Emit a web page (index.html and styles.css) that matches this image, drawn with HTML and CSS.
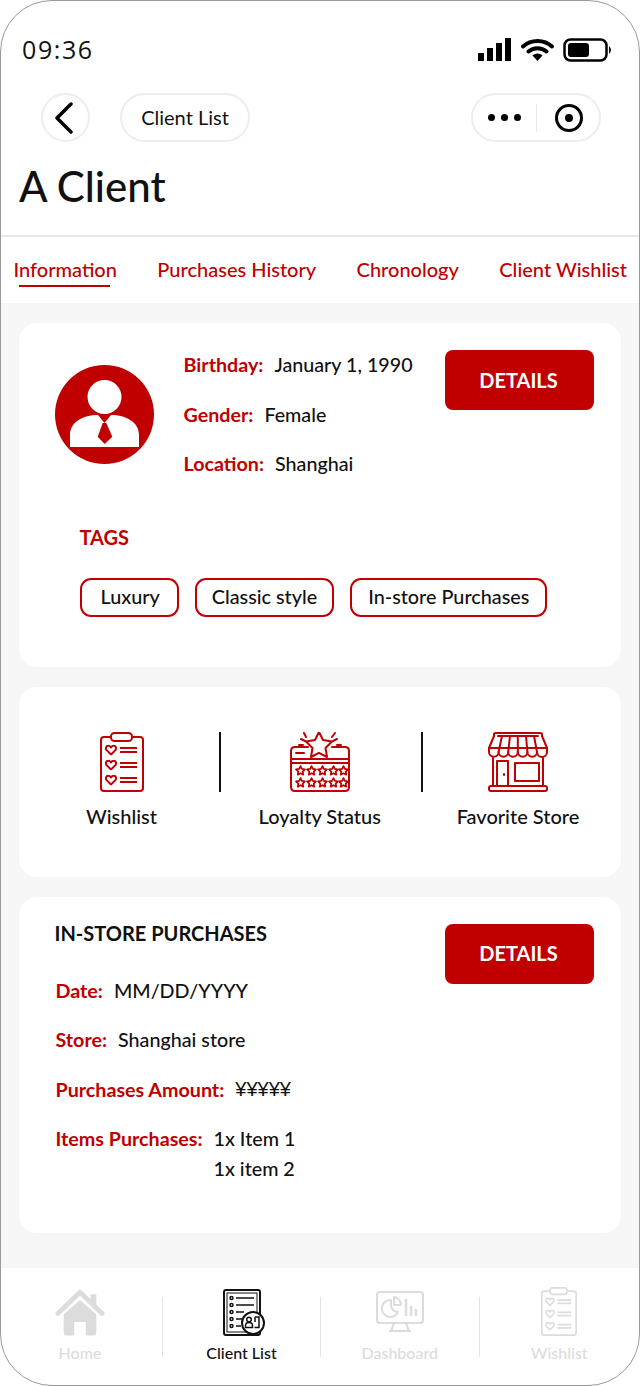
FILE: index.html
```html
<!DOCTYPE html>
<html lang="en">
<head>
    <meta charset="UTF-8">
    <meta name="viewport" content="width=device-width, initial-scale=1.0">
    <title>A Client</title>
    <link rel="stylesheet" href="styles.css">
</head>
<body>
    <svg class="defs" width="0" height="0">
        <symbol id="heart" viewBox="0 0 12 11">
            <path d="M6 10 1.600 5.600C.2 4 1 1.200 3.200 1.200 4.500 1.200 5.400 2 6 3 6.600 2 7.500 1.200 8.800 1.200 11 1.200 11.800 4 10.400 5.600Z" fill="none" stroke="currentColor" stroke-width="2" stroke-linejoin="round"/>
        </symbol>
        <symbol id="clipboard" viewBox="0 0 44 60">
            <g fill="none" stroke="currentColor" stroke-width="2" stroke-linejoin="round">
                <path d="M11 5H4Q1 5 1 8V56Q1 59 4 59H40Q43 59 43 56V8Q43 5 40 5H32"/>
                <rect x="11" y="1" width="21" height="8" rx="3.500"/>
                <path d="M20 16H37M20 20H37M20 31H37M20 35H37M20 46H37M20 50H37"/>
            </g>
            <use href="#heart" x="5" y="12.500" width="12" height="11"/>
            <use href="#heart" x="5" y="27.500" width="12" height="11"/>
            <use href="#heart" x="5" y="42.500" width="12" height="11"/>
        </symbol>
        <symbol id="ministar" viewBox="0 0 10 10">
            <path d="M5 1 6.200 3.600 9 4 7 6 7.500 8.800 5 7.500 2.500 8.800 3 6 1 4 3.800 3.600Z" fill="none" stroke="currentColor" stroke-width="1.600" stroke-linejoin="round"/>
        </symbol>
    </svg>

    <div class="phone">
        <header class="top">
            <div class="status">
                <span class="clock">09:36</span>
                <div class="status-icons">
                    <svg width="34" height="24" viewBox="0 0 34 24"><path d="M0 15h6v8H0zM9 10h6v13H9zM18 5h6v18h-6zM27 0h6v23h-6z" fill="#000"/></svg>
                    <svg width="33" height="24" viewBox="0 0 33 24"><path d="M2 8.500C10 1 23 1 31 8.500M7.500 13.500C12.500 9 20.500 9 25.500 13.500" fill="none" stroke="#000" stroke-width="4" stroke-linecap="round"/><path d="M11.500 17.500Q16.500 13.500 21.500 17.500L16.500 23Z" fill="#000"/></svg>
                    <svg width="50" height="24" viewBox="0 0 50 24"><rect x="1.500" y="1.500" width="42" height="21" rx="6" fill="none" stroke="#000" stroke-width="2.500"/><rect x="5" y="5" width="21" height="14" rx="3" fill="#000"/><path d="M46 8q4 4 0 8z" fill="#000"/></svg>
                </div>
            </div>
            <div class="nav">
                <div class="back">
                    <svg width="20" height="32" viewBox="0 0 20 32"><path d="M17 2 3 16l14 14" fill="none" stroke="#000" stroke-width="3.500" stroke-linecap="round" stroke-linejoin="round"/></svg>
                </div>
                <div class="pill">Client List</div>
                <div class="capsule">
                    <div class="dots"><i></i><i></i><i></i></div>
                    <div class="capsule-line"></div>
                    <svg width="28" height="28" viewBox="0 0 28 28"><circle cx="14" cy="14" r="12.500" fill="none" stroke="#000" stroke-width="3"/><circle cx="14" cy="14" r="4" fill="#000"/></svg>
                </div>
            </div>
            <h1>A Client</h1>
        </header>

        <nav class="tabs">
            <a class="tab active">Information</a>
            <a class="tab">Purchases History</a>
            <a class="tab">Chronology</a>
            <a class="tab">Client Wishlist</a>
        </nav>

        <main class="content">
            <section class="card profile">
                <div class="profile-top">
                    <svg class="avatar" width="99" height="99" viewBox="0 0 99 99">
                        <circle cx="49.500" cy="49.500" r="49.500" fill="#c00000"/>
                        <circle cx="49.500" cy="32" r="17" fill="#fff"/>
                        <path d="M15 82V70C15 57 28 50 43 50L49.500 58 56 50C71 50 84 57 84 70V82Z" fill="#fff"/>
                        <path d="M47.700 58H51.300L57.300 71.700 49.700 79 42.700 71.700Z" fill="#c00000"/>
                    </svg>
                    <div class="info">
                        <div class="row"><b>Birthday:</b><span>January 1, 1990</span></div>
                        <div class="row"><b>Gender:</b><span>Female</span></div>
                        <div class="row"><b>Location:</b><span>Shanghai</span></div>
                    </div>
                    <button class="details profile-btn">DETAILS</button>
                </div>
                <h3 class="tags-title">TAGS</h3>
                <div class="tags">
                    <span class="tag tag-luxury">Luxury</span>
                    <span class="tag tag-classic">Classic style</span>
                    <span class="tag">In-store Purchases</span>
                </div>
            </section>

            <section class="card shortcuts">
                <div class="shortcut">
                    <svg class="red" width="44" height="60"><use href="#clipboard"/></svg>
                    <span>Wishlist</span>
                </div>
                <div class="vline"></div>
                <div class="shortcut shortcut-mid">
                    <svg class="red" width="60" height="60" viewBox="0 0 60 60">
                        <g fill="none" stroke="currentColor" stroke-width="2" stroke-linejoin="round" stroke-linecap="round">
                            <path d="M18 15H5Q1 15 1 19V55Q1 59 5 59H55Q59 59 59 55V19Q59 15 55 15H42"/>
                            <path d="M1 27H59M1 31H59M6 21H14"/>
                            <path d="M29 0 33 8 42 9.500 35.500 16 37 25 29 20.800 21 25 22.500 16 16 9.500 25 8Z" fill="#fff"/>
                            <path d="M11 7 15 9M14 1 16 5M47 7 43 9M45 1 42 5M9 13H13M51 13H47"/>
                        </g>
                        <use href="#ministar" x="5" y="33" width="11" height="11"/><use href="#ministar" x="16" y="33" width="11" height="11"/><use href="#ministar" x="27" y="33" width="11" height="11"/><use href="#ministar" x="38" y="33" width="11" height="11"/><use href="#ministar" x="48" y="33" width="11" height="11"/>
                        <use href="#ministar" x="5" y="45" width="11" height="11"/><use href="#ministar" x="16" y="45" width="11" height="11"/><use href="#ministar" x="27" y="45" width="11" height="11"/><use href="#ministar" x="38" y="45" width="11" height="11"/><use href="#ministar" x="48" y="45" width="11" height="11"/>
                    </svg>
                    <span>Loyalty Status</span>
                </div>
                <div class="vline"></div>
                <div class="shortcut">
                    <svg class="red" width="60" height="60" viewBox="0 0 60 60">
                        <g fill="none" stroke="currentColor" stroke-width="2" stroke-linejoin="round" stroke-linecap="round">
                            <path d="M6 4V2Q6 1 8 1H52Q54 1 54 2V4M10 4H50"/>
                            <path d="M6 4 1 16V20A4.800 4.800 0 0 0 10.600 20 4.800 4.800 0 0 0 20.200 20 4.800 4.800 0 0 0 29.800 20 4.800 4.800 0 0 0 39.400 20 4.800 4.800 0 0 0 49 20 4.800 4.800 0 0 0 59 20V16L54 4"/>
                            <path d="M10.600 20 14 4M20.200 20 22 4M29.800 20V4M39.400 20 38 4M49 20 46 4M1 16H59"/>
                            <path d="M5 26V54M55 26V54M9 54V29H20V54M27 31H51V49H27V31"/>
                            <path d="M3 54H57Q59 54 59 56V57Q59 59 57 59H3Q1 59 1 57V56Q1 54 3 54Z"/>
                            <path d="M16 42V43"/>
                        </g>
                    </svg>
                    <span>Favorite Store</span>
                </div>
            </section>

            <section class="card purchases">
                <div class="purchases-main">
                    <h3 class="purchases-title">IN-STORE PURCHASES</h3>
                    <div class="info">
                        <div class="row"><b>Date:</b><span>MM/DD/YYYY</span></div>
                        <div class="row"><b>Store:</b><span>Shanghai store</span></div>
                        <div class="row"><b>Purchases Amount:</b><span class="price">¥¥¥¥¥</span></div>
                        <div class="row row-items"><b>Items Purchases:</b><span>1x Item 1<br>1x item 2</span></div>
                    </div>
                </div>
                <button class="details">DETAILS</button>
            </section>
        </main>

        <footer class="tabbar">
            <div class="bar-item bar-home muted">
                <svg width="50" height="47" viewBox="0 0 52 48">
                    <path d="M3 25 26 3 49 25" fill="none" stroke="currentColor" stroke-width="5" stroke-linecap="round" stroke-linejoin="round"/>
                    <path d="M37 5h6v14l-6-5z" fill="currentColor"/>
                    <path d="M9 26 26 11 43 26V45Q43 48 40 48H32V34H20V48H12Q9 48 9 45Z" fill="currentColor"/>
                </svg>
                <span>Home</span>
            </div>
            <div class="bar-line"></div>
            <div class="bar-item">
                <svg class="list-icon" width="42" height="47" viewBox="0 0 42 47">
                    <rect x="1" y="1" width="36" height="45" rx="2" fill="#fff" stroke="#111" stroke-width="2"/>
                    <rect x="4" y="4" width="30" height="39" fill="none" stroke="#111"/>
                    <g fill="none" stroke="#111" stroke-width="1.500">
                        <circle cx="8.500" cy="9" r="1.500"/><circle cx="8.500" cy="16" r="1.500"/><circle cx="8.500" cy="23" r="1.500"/><circle cx="8.500" cy="30" r="1.500"/><circle cx="8.500" cy="37" r="1.500"/>
                        <path d="M13 9H31M13 16H31M13 23H21M13 30H19M13 37H18"/>
                    </g>
                    <circle cx="30" cy="34" r="11" fill="#fff" stroke="#111" stroke-width="2"/>
                    <g fill="none" stroke="#111" stroke-width="1.500">
                        <circle cx="26" cy="30.500" r="2.300"/><path d="M22.500 38.500V36.500Q22.500 33.500 26 33.500 29.500 33.500 29.500 36.500V38.500Z"/>
                        <path d="M32 28H36V38.500H31.500M32 28V33"/>
                    </g>
                </svg>
                <span>Client List</span>
            </div>
            <div class="bar-line"></div>
            <div class="bar-item muted">
                <svg width="48" height="48" viewBox="0 0 48 48">
                    <g fill="none" stroke="currentColor" stroke-width="2" stroke-linejoin="round">
                        <rect x="1" y="5" width="46" height="31" rx="3"/>
                        <path d="M18 36 15 44H33L30 36M13 44H35"/>
                        <path d="M15 13A8.500 8.500 0 1 0 22 25 7 7 0 0 1 15 18Z"/>
                        <path d="M18 10A8 8 0 0 1 25 18H18Z"/>
                        <path d="M30 12V29M35 19V29M40 22V29" stroke-width="2.500"/>
                    </g>
                </svg>
                <span>Dashboard</span>
            </div>
            <div class="bar-line"></div>
            <div class="bar-item muted">
                <svg width="36" height="49"><use href="#clipboard"/></svg>
                <span>Wishlist</span>
            </div>
        </footer>
    </div>
</body>
</html>
```

FILE: styles.css
```css
* {
    box-sizing: border-box;
}
body {
    margin: 0;
    background-color: #fff;
    font-family: Lato, "Liberation Sans", sans-serif;
    color: #111;
}
.defs {
    display: block;
    height: 0;
}
.phone {
    width: 640px;
    height: 1386px;
    border: 1.5px solid #9a9a9a;
    border-radius: 52px;
    overflow: hidden;
    display: flex;
    flex-direction: column;
    background-color: #fff;
}

/* header */
.top {
    height: 236px;
    border-bottom: 2px solid #e8e8e8;
}
.status {
    display: flex;
    justify-content: space-between;
    align-items: center;
    padding: 33px 26px 0 21px;
}
.clock {
    font-family: "Open Sans", sans-serif;
    font-size: 25px;
    font-weight: 500;
    line-height: 30px;
    padding-bottom: 2px;
    letter-spacing: 1.600px;
    color: #111;
}
.status-icons {
    display: flex;
    align-items: center;
    gap: 9px;
}
.nav {
    display: flex;
    align-items: center;
    margin-top: 27px;
    padding: 0 38px 0 40px;
}
.back {
    width: 49px;
    height: 49px;
    border: 2px solid #ededed;
    border-radius: 50%;
    display: flex;
    align-items: center;
    justify-content: center;
    padding-right: 3px;
}
.pill {
    width: 130px;
    height: 49px;
    margin-left: 30px;
    border: 2px solid #ededed;
    border-radius: 25px;
    font-size: 20px;
    line-height: 45px;
    text-align: center;
}
.capsule {
    width: 130px;
    height: 49px;
    margin-left: auto;
    border: 2px solid #ededed;
    border-radius: 25px;
    display: flex;
    align-items: center;
    padding-left: 15px;
}
.dots {
    display: flex;
    gap: 6px;
}
.dots i {
    width: 7px;
    height: 7px;
    border-radius: 50%;
    background-color: #000;
}
.capsule-line {
    width: 1px;
    height: 28px;
    margin: 0 18px 0 15px;
    background-color: #e8e8e8;
}
h1 {
    margin: 19px 0 0 18px;
    font-size: 42px;
    line-height: 50px;
    font-weight: 500;
}

/* tabs */
.tabs {
    height: 66px;
    display: flex;
    justify-content: space-between;
    padding: 0 12px 0 12.500px;
}
.tab {
    position: relative;
    font-size: 20px;
    line-height: 64px;
    font-weight: 500;
    color: #c00000;
}
.tab.active::after {
    content: "";
    position: absolute;
    left: 5px;
    right: 7px;
    top: 48px;
    height: 2px;
    background-color: #c00000;
}

/* cards */
.content {
    flex: 1;
    background-color: #f6f6f6;
    padding: 20px 18px 20px 17.500px;
    display: flex;
    flex-direction: column;
    gap: 20px;
}
.card {
    background-color: #fff;
    border-radius: 18px;
}
.profile {
    height: 344px;
    padding: 17px 27px 0 36px;
}
.profile-top {
    display: flex;
    align-items: flex-start;
}
.avatar {
    flex: none;
    margin-top: 25px;
    margin-right: 30px;
}
.row {
    display: flex;
    gap: 11px;
    height: 49.500px;
    align-items: center;
    font-size: 19.700px;
    font-weight: 500;
}
.row b {
    color: #c00000;
    font-weight: 700;
}
.details {
    display: block;
    width: 149px;
    height: 60px;
    margin-left: auto;
    padding: 0 2px 0 0;
    background-color: #c00000;
    color: #fff;
    border: none;
    border-radius: 8px;
    font-family: inherit;
    font-size: 20px;
    font-weight: 700;
}
.profile-btn {
    margin-top: 10px;
}
.tags-title {
    margin: 36px 0 0 25px;
    font-size: 20px;
    line-height: 24px;
    font-weight: 700;
    color: #c00000;
}
.tags {
    display: flex;
    gap: 16.500px;
    margin: 29px 0 0 25px;
}
.tag {
    height: 39px;
    padding: 0 16px;
    border: 2px solid #c00000;
    border-radius: 11px;
    font-size: 19.800px;
    font-weight: 500;
    line-height: 33px;
}
.tag-luxury {
    padding: 0 17px 0 19px;
}
.tag-classic {
    padding: 0 14.500px;
}
.shortcuts {
    height: 190px;
    display: grid;
    grid-template-columns: 195px 2px 199.500px 2px 191px;
    padding: 45px 0 0 5.500px;
    align-items: start;
}
.shortcut {
    display: flex;
    flex-direction: column;
    align-items: center;
    gap: 12px;
    font-size: 20px;
    font-weight: 500;
    line-height: 24px;
}
.shortcut-mid {
    padding-right: 2px;
}
.red {
    color: #c00000;
}
.vline {
    height: 60px;
    background-color: #111;
}
.purchases {
    height: 336px;
    padding: 26px 27px 0 36px;
    display: flex;
    align-items: flex-start;
}
.purchases .details {
    margin-top: 1px;
    padding-bottom: 2px;
}
.purchases-title {
    margin: 0;
    font-size: 20px;
    line-height: 20px;
    font-weight: 700;
    color: #111;
}
.purchases-main .info {
    margin-top: 22.500px;
    padding-left: 1px;
}
.price {
    font-family: "Liberation Sans", sans-serif;
    font-size: 20px;
}
.row-items {
    align-items: flex-start;
    line-height: 30px;
    padding-top: 10px;
}
.purchases-main {
    flex: 1;
}

/* bottom bar */
.tabbar {
    height: 117px;
    display: grid;
    grid-template-columns: 161px 1px 157px 1px 157.500px 1px 1fr;
    padding-top: 19px;
    align-items: start;
}
.bar-item {
    height: 75.500px;
    display: flex;
    flex-direction: column;
    align-items: center;
    justify-content: space-between;
    font-size: 16px;
    font-weight: 500;
    line-height: 20px;
    color: #111;
}
.bar-item.muted {
    color: #dcdcdc;
}
.bar-home {
    padding-right: 3px;
}
.bar-home svg,
.list-icon {
    margin-top: 1.500px;
}
.list-icon {
    margin-left: 4px;
}
.bar-line {
    height: 60px;
    margin-top: 10px;
    background-color: #e4e4e4;
}
```
